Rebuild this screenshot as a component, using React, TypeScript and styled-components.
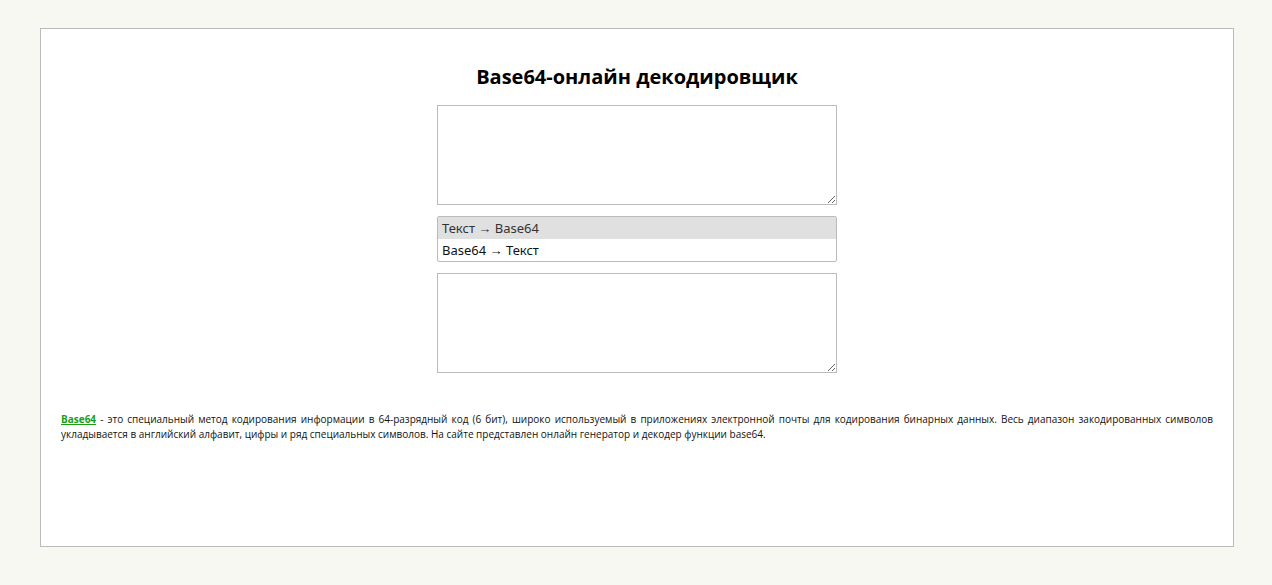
import styled, { createGlobalStyle } from "styled-components";
import { useState } from "react";

const GlobalStyle = createGlobalStyle`
  body {
    margin: 0;
    padding: 28px 38px 0 40px;
    background: #f8f8f3;
    font-family: "Open Sans", "Noto Sans", sans-serif;
  }
`;

const Page = styled.main`
  display: flex;
  flex-direction: column;
  align-items: center;
  height: 519px;
  box-sizing: border-box;
  padding: 34px 20px 0 20px;
  background: #fff;
  border: 1px solid #bbb;
`;

const Title = styled.h1`
  margin: 0 0 14px 0;
  font-size: 20px;
  font-weight: 700;
  line-height: 28px;
  color: #000;
`;

const Field = styled.textarea`
  display: block;
  width: 400px;
  height: 100px;
  box-sizing: border-box;
  margin: 0 0 11px 0;
  padding: 4px;
  border: 1px solid #bbb;
  font-family: "Open Sans", "Noto Sans", sans-serif;
  font-size: 13px;
  resize: both;
  outline: none;
`;

const Mode = styled.select`
  display: block;
  width: 400px;
  height: 46px;
  box-sizing: border-box;
  margin: 0 0 11px 0;
  padding: 0;
  border: 1px solid #bbb;
  font-family: "Noto Sans", "Open Sans", sans-serif;
  font-size: 13px;
  color: #111;
  outline: none;
  overflow: hidden;

  option {
    padding: 2px 4px 2px 4px;
    line-height: 18px;
  }

  option:checked {
    background: #e0e0e0;
    color: #333;
  }
`;

const About = styled.p`
  align-self: stretch;
  margin: 28px 0 0 0;
  font-size: 10px;
  line-height: 15px;
  text-align: justify;
  color: #111;
`;

const Term = styled.a`
  color: #18a018;
  font-weight: 700;
  text-decoration: underline;
`;

export default function App() {
  const [mode, setMode] = useState("encode");
  return (
    <>
      <GlobalStyle />
      <Page>
        <Title>Base64-онлайн декодировщик</Title>
        <Field />
        <Mode size={2} value={mode} onChange={e => setMode(e.target.value)}>
          <option value="encode">Текст → Base64</option>
          <option value="decode">Base64 → Текст</option>
        </Mode>
        <Field />
        <About>
          <Term href="#">Base64</Term> - это специальный метод кодирования информации в 64-разрядный код (6 бит),
          широко используемый в приложениях электронной почты для кодирования бинарных данных. Весь диапазон
          закодированных символов укладывается в английский алфавит, цифры и ряд специальных символов. На сайте
          представлен онлайн генератор и декодер функции base64.
        </About>
      </Page>
    </>
  );
}
